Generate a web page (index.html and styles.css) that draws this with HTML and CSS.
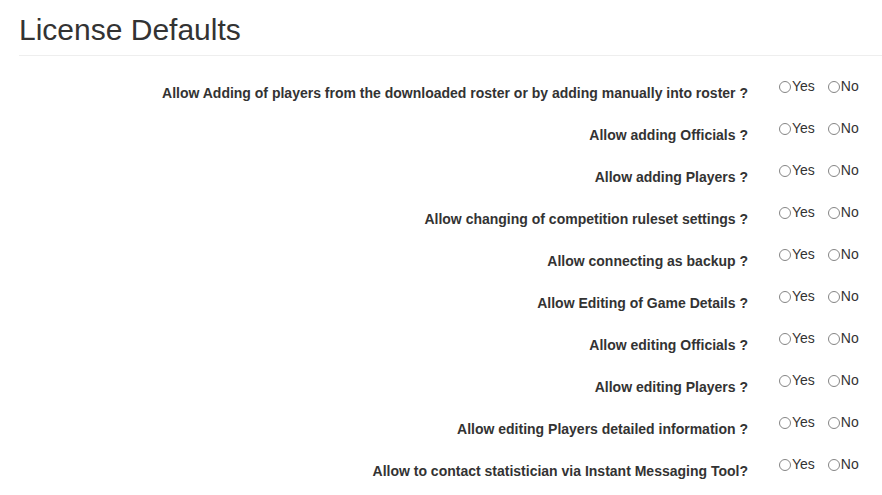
FILE: index.html
```html
<!DOCTYPE html>
<html lang="en">
<head>
  <meta charset="UTF-8">
  <title>License Defaults</title>
  <link rel="stylesheet" href="styles.css">
</head>
<body>

  <div class="page">
    <h1 class="page-header">License Defaults</h1>

    <form class="license-form">
      <div class="form-row">
        <label class="control-label">Allow Adding of players from the downloaded roster or by adding manually into roster ?</label>
        <div class="choices">
          <label class="radio-inline"><input type="radio" name="q1">Yes</label>
          <label class="radio-inline"><input type="radio" name="q1">No</label>
        </div>
      </div>
      <div class="form-row">
        <label class="control-label">Allow adding Officials ?</label>
        <div class="choices">
          <label class="radio-inline"><input type="radio" name="q2">Yes</label>
          <label class="radio-inline"><input type="radio" name="q2">No</label>
        </div>
      </div>
      <div class="form-row">
        <label class="control-label">Allow adding Players ?</label>
        <div class="choices">
          <label class="radio-inline"><input type="radio" name="q3">Yes</label>
          <label class="radio-inline"><input type="radio" name="q3">No</label>
        </div>
      </div>
      <div class="form-row">
        <label class="control-label">Allow changing of competition ruleset settings ?</label>
        <div class="choices">
          <label class="radio-inline"><input type="radio" name="q4">Yes</label>
          <label class="radio-inline"><input type="radio" name="q4">No</label>
        </div>
      </div>
      <div class="form-row">
        <label class="control-label">Allow connecting as backup ?</label>
        <div class="choices">
          <label class="radio-inline"><input type="radio" name="q5">Yes</label>
          <label class="radio-inline"><input type="radio" name="q5">No</label>
        </div>
      </div>
      <div class="form-row">
        <label class="control-label">Allow Editing of Game Details ?</label>
        <div class="choices">
          <label class="radio-inline"><input type="radio" name="q6">Yes</label>
          <label class="radio-inline"><input type="radio" name="q6">No</label>
        </div>
      </div>
      <div class="form-row">
        <label class="control-label">Allow editing Officials ?</label>
        <div class="choices">
          <label class="radio-inline"><input type="radio" name="q7">Yes</label>
          <label class="radio-inline"><input type="radio" name="q7">No</label>
        </div>
      </div>
      <div class="form-row">
        <label class="control-label">Allow editing Players ?</label>
        <div class="choices">
          <label class="radio-inline"><input type="radio" name="q8">Yes</label>
          <label class="radio-inline"><input type="radio" name="q8">No</label>
        </div>
      </div>
      <div class="form-row">
        <label class="control-label">Allow editing Players detailed information ?</label>
        <div class="choices">
          <label class="radio-inline"><input type="radio" name="q9">Yes</label>
          <label class="radio-inline"><input type="radio" name="q9">No</label>
        </div>
      </div>
      <div class="form-row">
        <label class="control-label">Allow to contact statistician via Instant Messaging Tool?</label>
        <div class="choices">
          <label class="radio-inline"><input type="radio" name="q10">Yes</label>
          <label class="radio-inline"><input type="radio" name="q10">No</label>
        </div>
      </div>
    </form>
  </div>

</body>
</html>
```

FILE: styles.css
```css
* {
  box-sizing: border-box;
}

body {
  margin: 0;
  background: #fff;
  color: #333;
  font-family: 'Liberation Sans', Arial, sans-serif;
  font-size: 14px;
  line-height: 20px;
}

.page {
  padding: 13px 0 0 19px;
}

.page-header {
  margin: 0;
  padding-bottom: 9px;
  border-bottom: 1px solid #eee;
  font-size: 30px;
  line-height: 33px;
  font-weight: 400;
}

.license-form {
  margin-top: 20px;
}

.form-row {
  display: flex;
  height: 42px;
}

.control-label {
  flex: none;
  width: 729px;
  padding-top: 7px;
  text-align: right;
  font-weight: bold;
}

.choices {
  display: flex;
  gap: 13px;
  padding-left: 31px;
}

.radio-inline {
  display: flex;
  align-items: center;
  height: 20px;
  color: #333;
}

.radio-inline input {
  -webkit-appearance: none;
  appearance: none;
  flex: none;
  width: 12px;
  height: 12px;
  margin: 2px 1px 0 0;
  border: 1px solid #858585;
  border-radius: 50%;
  background: #fff;
}
```
